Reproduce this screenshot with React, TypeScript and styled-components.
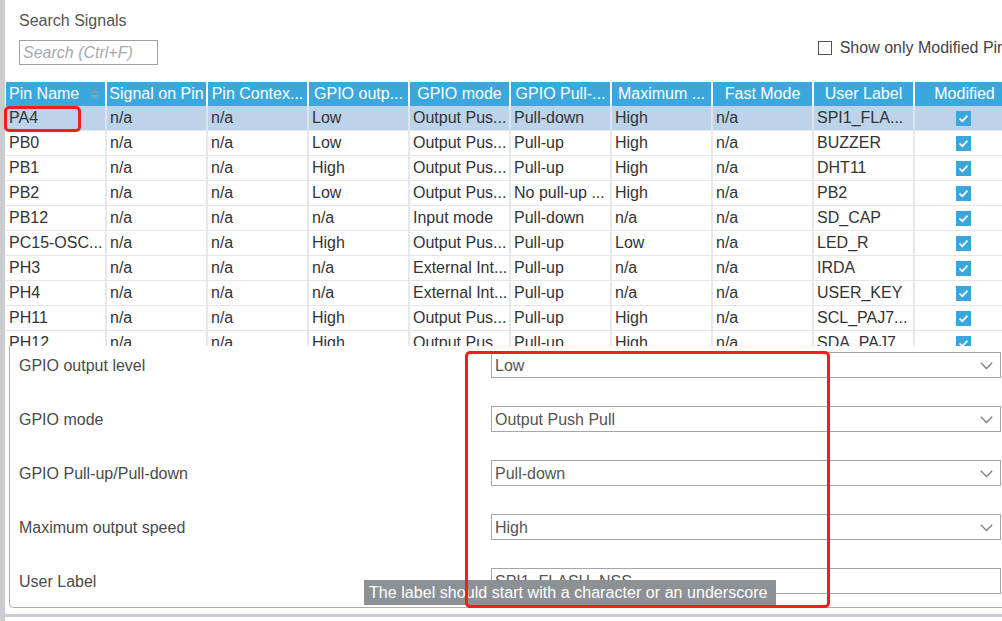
import React from "react";
import styled, { createGlobalStyle } from "styled-components";

const GlobalStyle = createGlobalStyle`
  html, body { margin: 0; padding: 0; background: #fff; overflow: hidden; }
  body { font-family: "Liberation Sans", Arial, sans-serif; font-size: 16px; color: #333; }
  #root { width: 1002px; height: 621px; overflow: hidden; }
`;

const Screen = styled.div`
  position: relative;
  width: 1020px;
  height: 621px;
  display: flex;
  overflow: hidden;
  background: #fff;
`;

const SideStrip = styled.div`
  width: 5px;
  flex-shrink: 0;
  background: #c9cdd2;
`;

const Main = styled.div`
  flex: 1;
  min-width: 0;
  display: flex;
  flex-direction: column;
`;

const SearchArea = styled.div`
  height: 82px;
  box-sizing: border-box;
  padding: 11px 6px 0 14px;
  display: flex;
  flex-direction: column;
  gap: 9px;
`;

const Title = styled.div`
  line-height: 20px;
  height: 20px;
  color: #555;
`;

const SearchRow = styled.div`
  display: flex;
  align-items: flex-start;
`;

const SearchInput = styled.div`
  width: 139px;
  height: 25px;
  box-sizing: border-box;
  border: 1px solid #9da1a5;
  padding-left: 3px;
  line-height: 23px;
  font-style: italic;
  color: #a6a9ad;
`;

const CheckLabel = styled.label`
  margin-left: auto;
  height: 16px;
  display: flex;
  align-items: center;
  gap: 8px;
  white-space: nowrap;
  color: #444;
  line-height: 16px;
`;

const EmptyBox = styled.span`
  width: 14px;
  height: 14px;
  box-sizing: border-box;
  border: 1px solid #555;
  background: #fff;
`;

const Table = styled.div`
  margin-left: 1px;
  height: 264px;
  overflow: hidden;
`;

const HeaderRow = styled.div`
  display: grid;
  grid-template-columns: repeat(10, 101px);
  height: 24px;
`;

const HeaderCell = styled.div<{ $left?: boolean }>`
  position: relative;
  background: #3aa8dc;
  color: #fff;
  border-right: 2px solid #fff;
  line-height: 24px;
  white-space: nowrap;
  overflow: hidden;
  text-align: ${(p) => (p.$left ? "left" : "center")};
  padding: ${(p) => (p.$left ? "0 0 0 3px" : "0 2px")};
`;

const SortIcon = styled.svg`
  position: absolute;
  right: 6px;
  top: 6px;
`;

const BodyRow = styled.div<{ $selected?: boolean }>`
  display: grid;
  grid-template-columns: repeat(10, 101px);
  height: 25px;
  background: ${(p) => (p.$selected ? "#bcd3ea" : "#fff")};
`;

const Cell = styled.div<{ $selected?: boolean; $center?: boolean }>`
  border-right: 2px solid ${(p) => (p.$selected ? "#dbe5ef" : "#e5e8ec")};
  border-bottom: 1px solid #e2e5e9;
  padding-left: 3px;
  line-height: 24px;
  white-space: nowrap;
  overflow: hidden;
  color: #333;
  display: flex;
  align-items: center;
  justify-content: ${(p) => (p.$center ? "center" : "flex-start")};
`;

const CheckedBox = styled.span`
  width: 15px;
  height: 15px;
  background: #3aa6dc;
  display: flex;
  align-items: center;
  justify-content: center;
  margin-left: -6px;
`;

const Panel = styled.div`
  margin-left: 4px;
  height: 262px;
  box-sizing: border-box;
  border-left: 1px solid #a9adb2;
  border-bottom: 1px solid #a9adb2;
  border-bottom-left-radius: 5px;
  padding: 6px 0 0 9px;
  display: grid;
  grid-template-columns: 472px 510px;
  grid-auto-rows: 26px;
  row-gap: 28px;
`;

const FieldLabel = styled.div`
  line-height: 27px;
  color: #4a4a4a;
  white-space: nowrap;
`;

const Field = styled.div`
  position: relative;
  height: 26px;
  box-sizing: border-box;
  border: 1px solid #a3a7ab;
  background: #fff;
  padding-left: 3px;
  line-height: 25px;
  color: #555;
`;

const Chevron = styled.svg`
  position: absolute;
  right: 7px;
  top: 9px;
`;

const Footer = styled.div`
  height: 13px;
  display: flex;
  flex-direction: column;
  padding-top: 6px;
  box-sizing: border-box;
`;

const FooterBar = styled.div`
  height: 3px;
  margin-left: -5px;
  background: #c9cdd2;
`;

const Tooltip = styled.div`
  position: absolute;
  left: 364px;
  top: 580px;
  height: 25px;
  padding: 0 8px 0 5px;
  line-height: 25px;
  background: #8c9196;
  color: #fff;
  white-space: nowrap;
  letter-spacing: 0.05px;
`;

const Marker = styled.div<{ $x: number; $y: number; $w: number; $h: number }>`
  position: absolute;
  left: ${(p) => p.$x}px;
  top: ${(p) => p.$y}px;
  width: ${(p) => p.$w}px;
  height: ${(p) => p.$h}px;
  box-sizing: border-box;
  border: 3px solid #f21d1d;
  border-radius: 5px;
  pointer-events: none;
`;

const headers = [
  "Pin Name",
  "Signal on Pin",
  "Pin Contex...",
  "GPIO outp...",
  "GPIO mode",
  "GPIO Pull-...",
  "Maximum ...",
  "Fast Mode",
  "User Label",
  "Modified",
];

const rows: string[][] = [
  ["PA4", "n/a", "n/a", "Low", "Output Pus...", "Pull-down", "High", "n/a", "SPI1_FLA..."],
  ["PB0", "n/a", "n/a", "Low", "Output Pus...", "Pull-up", "High", "n/a", "BUZZER"],
  ["PB1", "n/a", "n/a", "High", "Output Pus...", "Pull-up", "High", "n/a", "DHT11"],
  ["PB2", "n/a", "n/a", "Low", "Output Pus...", "No pull-up ...", "High", "n/a", "PB2"],
  ["PB12", "n/a", "n/a", "n/a", "Input mode", "Pull-down", "n/a", "n/a", "SD_CAP"],
  ["PC15-OSC...", "n/a", "n/a", "High", "Output Pus...", "Pull-up", "Low", "n/a", "LED_R"],
  ["PH3", "n/a", "n/a", "n/a", "External Int...", "Pull-up", "n/a", "n/a", "IRDA"],
  ["PH4", "n/a", "n/a", "n/a", "External Int...", "Pull-up", "n/a", "n/a", "USER_KEY"],
  ["PH11", "n/a", "n/a", "High", "Output Pus...", "Pull-up", "High", "n/a", "SCL_PAJ7..."],
  ["PH12", "n/a", "n/a", "High", "Output Pus...", "Pull-up", "High", "n/a", "SDA_PAJ7..."],
];

const fields: { label: string; value: string; select: boolean }[] = [
  { label: "GPIO output level", value: "Low", select: true },
  { label: "GPIO mode", value: "Output Push Pull", select: true },
  { label: "GPIO Pull-up/Pull-down", value: "Pull-down", select: true },
  { label: "Maximum output speed", value: "High", select: true },
  { label: "User Label", value: "SPI1_FLASH_NSS", select: false },
];

const Check = () => (
  <svg width="11" height="9" viewBox="0 0 11 9">
    <path d="M1.5 4.5 L4.3 7.2 L9.5 1.6" fill="none" stroke="#fff" strokeWidth="1.7" />
  </svg>
);

export default function App() {
  return (
    <>
      <GlobalStyle />
      <Screen>
        <SideStrip />
        <Main>
          <SearchArea>
            <Title>Search Signals</Title>
            <SearchRow>
              <SearchInput>Search (Ctrl+F)</SearchInput>
              <CheckLabel>
                <EmptyBox />
                Show only Modified Pins
              </CheckLabel>
            </SearchRow>
          </SearchArea>
          <Table>
            <HeaderRow>
              {headers.map((h, i) => (
                <HeaderCell key={h} $left={i === 0}>
                  {h}
                  {i === 0 && (
                    <SortIcon width="9" height="12" viewBox="0 0 9 12">
                      <path d="M4.5 0.5 L8.5 5 L0.5 5 Z" fill="#8b959c" />
                      <path d="M4.5 11.5 L8.5 7 L0.5 7 Z" fill="#6fa9c8" />
                    </SortIcon>
                  )}
                </HeaderCell>
              ))}
            </HeaderRow>
            {rows.map((r, ri) => (
              <BodyRow key={r[0]} $selected={ri === 0}>
                {r.map((c, ci) => (
                  <Cell key={ci} $selected={ri === 0}>
                    {c}
                  </Cell>
                ))}
                <Cell $selected={ri === 0} $center>
                  <CheckedBox>
                    <Check />
                  </CheckedBox>
                </Cell>
              </BodyRow>
            ))}
          </Table>
          <Panel>
            {fields.map((f) => (
              <React.Fragment key={f.label}>
                <FieldLabel>{f.label}</FieldLabel>
                <Field>
                  {f.value}
                  {f.select && (
                    <Chevron width="13" height="8" viewBox="0 0 13 8">
                      <path d="M0.8 0.8 L6.5 6.5 L12.2 0.8" fill="none" stroke="#7a7d80" strokeWidth="1.3" />
                    </Chevron>
                  )}
                </Field>
              </React.Fragment>
            ))}
          </Panel>
          <Footer>
            <FooterBar />
          </Footer>
        </Main>
        <Tooltip>The label should start with a character or an underscore</Tooltip>
        <Marker $x={4} $y={106} $w={77} $h={26} />
        <Marker $x={465} $y={351} $w={365} $h={257} />
      </Screen>
    </>
  );
}
